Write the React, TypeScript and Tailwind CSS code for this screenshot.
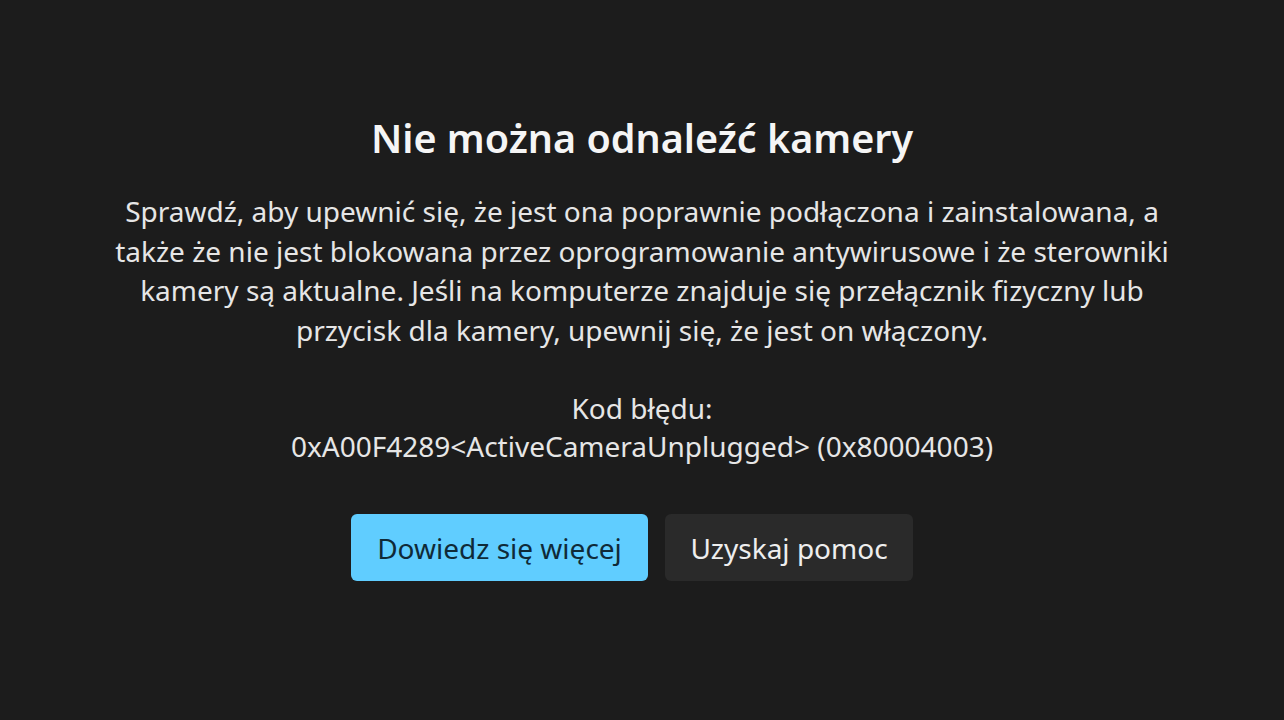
export default function App() {
  return (
    <main
      className="flex h-[720px] w-full flex-col items-center bg-[#1c1c1c] text-center text-white"
      style={{ fontFamily: '"Noto Sans", "Open Sans", sans-serif' }}
    >
      <h1 className="mt-[112px] text-[39.5px] font-semibold leading-[52px] text-[#f5f5f5]">
        Nie można odnaleźć kamery
      </h1>
      <p className="mt-[28px] whitespace-nowrap text-[28px] leading-[39.5px] text-[#e6e6e6]">
        Sprawdź, aby upewnić się, że jest ona poprawnie podłączona i zainstalowana, a
        <br />
        także że nie jest blokowana przez oprogramowanie antywirusowe i że sterowniki
        <br />
        kamery są aktualne. Jeśli na komputerze znajduje się przełącznik fizyczny lub
        <br />
        przycisk dla kamery, upewnij się, że jest on włączony.
      </p>
      <div className="mt-[39px] whitespace-nowrap text-[28px] leading-[38px] text-[#e6e6e6]">
        <div>Kod błędu:</div>
        <div>0xA00F4289&lt;ActiveCameraUnplugged&gt; (0x80004003)</div>
      </div>
      <div className="mt-[49px] mr-[20px] flex gap-[17px]">
        <button className="h-[67px] w-[297px] rounded-[6px] bg-[#60cdff] text-[28px] text-[#0f2a38]">
          Dowiedz się więcej
        </button>
        <button className="h-[67px] w-[248px] rounded-[6px] bg-[#2a2a2a] text-[28px] text-[#eeeeee]">
          Uzyskaj pomoc
        </button>
      </div>
    </main>
  );
}
